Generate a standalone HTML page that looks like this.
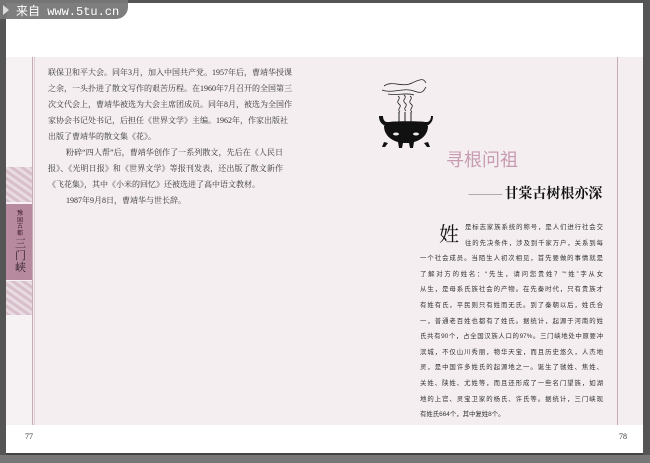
<!DOCTYPE html>
<html><head><meta charset="utf-8"><style>
*{margin:0;padding:0}
body{width:650px;height:463px;position:relative;background:#fff;overflow:hidden;font-family:"Liberation Serif","Noto Serif CJK SC",serif}
.a{position:absolute}
.lt p{font-size:8px;line-height:16px;color:#333;white-space:nowrap;width:235px;text-align-last:justify}
.lt p.l{text-align-last:left}
.rt p{font-size:6.4px;line-height:15.6px;color:#333;white-space:nowrap;width:183px;text-align-last:justify;font-family:"Liberation Sans","Noto Sans CJK SC",sans-serif}
.rt p.l{text-align-last:left}
.pat{background:repeating-linear-gradient(35deg,#d9bfcb 0 3px,#e9dbe2 3px 6px)}
</style></head><body>
<div class="a" style="left:0;top:0;width:650px;height:3px;background:#555"></div>
<div class="a" style="left:0;top:0;width:6px;height:463px;background:#555"></div>
<div class="a" style="left:643px;top:0;width:7px;height:463px;background:#555"></div>
<div class="a" style="left:0;top:455px;width:650px;height:8px;background:#777"></div>
<div class="a" style="left:6px;top:453px;width:637px;height:2px;background:#444"></div>
<div class="a" style="left:6px;top:57px;width:637px;height:368px;background:#f4eef1"></div>
<div class="a" style="left:6px;top:57px;width:26px;height:368px;background:#f6f1f3"></div>
<div class="a" style="left:32px;top:57px;width:1px;height:368px;background:#c8a9b8"></div>
<div class="a" style="left:34px;top:57px;width:1px;height:368px;background:#e0cfd7"></div>
<div class="a" style="left:617px;top:57px;width:1px;height:368px;background:#c8a9b8"></div>
<div class="a pat" style="left:6px;top:167px;width:26px;height:35px"></div>
<div class="a" style="left:6px;top:204px;width:26px;height:76px;background:#b88aa0"></div>
<div class="a pat" style="left:6px;top:281px;width:26px;height:34px"></div>
<div class="a" style="left:17px;top:210px;width:8px;font-size:6px;line-height:6.5px;color:#402030;font-family:'Noto Sans CJK SC',sans-serif">豫国古都</div>
<div class="a" style="left:15px;top:238px;width:12px;font-size:11px;line-height:12px;color:#302028">三门峡</div>

<div class="a" style="left:0;top:0;width:128px;height:19px;background:#777;border-radius:0 0 12px 0;opacity:.95"></div>
<div class="a" style="left:3px;top:5px;width:0;height:0;border-left:6px solid #ddd;border-top:5px solid transparent;border-bottom:5px solid transparent"></div>
<div class="a" style="left:16px;top:2px;font-size:12px;color:#fff;font-family:'Liberation Mono','Noto Sans CJK SC',monospace;white-space:nowrap">来自 www.5tu.cn</div>

<div class="a lt" style="left:48px;top:65px">
<p>联保卫和平大会。同年3月，加入中国共产党。1957年后，曹靖华授课</p>
<p>之余，一头扑进了散文写作的艰苦历程。在1960年7月召开的全国第三</p>
<p>次文代会上，曹靖华被选为大会主席团成员。同年8月，被选为全国作</p>
<p>家协会书记处书记，后担任《世界文学》主编。1962年，作家出版社</p>
<p class="l">出版了曹靖华的散文集《花》。</p>
<p style="padding-left:18px;width:217px">粉碎“四人帮”后，曹靖华创作了一系列散文，先后在《人民日</p>
<p>报》、《光明日报》和《世界文学》等报刊发表，还出版了散文新作</p>
<p class="l">《飞花集》，其中《小米的回忆》还被选进了高中语文教材。</p>
<p class="l" style="padding-left:18px">1987年9月8日，曹靖华与世长辞。</p>
</div>

<svg class="a" style="left:376px;top:76px" width="60" height="78" viewBox="0 0 60 78">
<g fill="none" stroke="#222" stroke-width="0.8">
<path d="M8 10c8-6 18 2 28-3s12-4 14 0M6 14c10 4 22-3 32 1s10-2 12-4M12 18c8 2 18-2 26 1"/>
<path d="M22 20c4 3-3 5 1 8s-3 5 1 8M28 19c4 3-3 5 1 8s-3 5 1 8M34 20c4 3-3 5 1 8s-3 5 1 8"/>
</g>
<g stroke="#222" stroke-width="1"><path d="M23 36v14M29 36v14M35 36v14"/></g>
<path d="M3 40c0 6 3 8 6 10h42c3-2 6-4 6-10l-2 0c0 4-2 6-4 6l-2 0c-4-1-30-1-36 0h-2c-2 0-4-2-4-6z" fill="#111"/>
<path d="M8 50h44c0 8-6 14-14 16l-1 6h-3l-1-5h-6l-1 5h-3l-1-6c-8-2-14-8-14-16z" fill="#111"/>
<path d="M8 66l-2 5h3l3-4zM52 66l2 5h-3l-3-4z" fill="#111"/>
<ellipse cx="20" cy="58" rx="3" ry="1.5" fill="#eee"/><ellipse cx="40" cy="58" rx="3" ry="1.5" fill="#eee"/>
</svg>

<div class="a" style="left:446px;top:146px;font-size:18px;color:#c79bb0;font-family:'Noto Sans CJK SC',sans-serif">寻根问祖</div>
<div class="a" style="left:468px;top:183px;white-space:nowrap;font-size:14px;color:#111;font-weight:bold;font-family:'Noto Serif CJK SC',serif"><span style="font-weight:normal;color:#999;letter-spacing:-2px">———</span> 甘棠古树根亦深</div>

<div class="a" style="left:439px;top:218px;font-size:20px;color:#111;font-family:'Noto Serif CJK SC',serif">姓</div>
<div class="a rt" style="left:420px;top:220px">
<p style="padding-left:45px;width:138px">是标志家族系统的称号，是人们进行社会交</p>
<p style="padding-left:45px;width:138px">往的先决条件，涉及到千家万户，关系到每</p>
<p>一个社会成员。当陌生人初次相见，首先要做的事情就是</p>
<p>了解对方的姓名：“先生，请问您贵姓？”“姓”字从女</p>
<p>从生，是母系氏族社会的产物。在先秦时代，只有贵族才</p>
<p>有姓有氏，平民则只有姓而无氏。到了秦朝以后，姓氏合</p>
<p>一，普通老百姓也都有了姓氏。据统计，起源于河南的姓</p>
<p>氏共有90个，占全国汉族人口的97%。三门峡地处中原要冲</p>
<p>滨城，不仅山川秀丽，物华天宝，而且历史悠久，人杰地</p>
<p>灵，是中国许多姓氏的起源地之一。诞生了虢姓、焦姓、</p>
<p>关姓、陕姓、尤姓等，而且还形成了一些名门望族，如湖</p>
<p>地的上官、灵宝卫家的杨氏、许氏等。据统计，三门峡现</p>
<p class="l">有姓氏664个，其中复姓8个。</p>
</div>

<div class="a" style="left:25px;top:432px;font-size:8px;color:#333">77</div>
<div class="a" style="left:619px;top:432px;font-size:8px;color:#333">78</div>
</body></html>
